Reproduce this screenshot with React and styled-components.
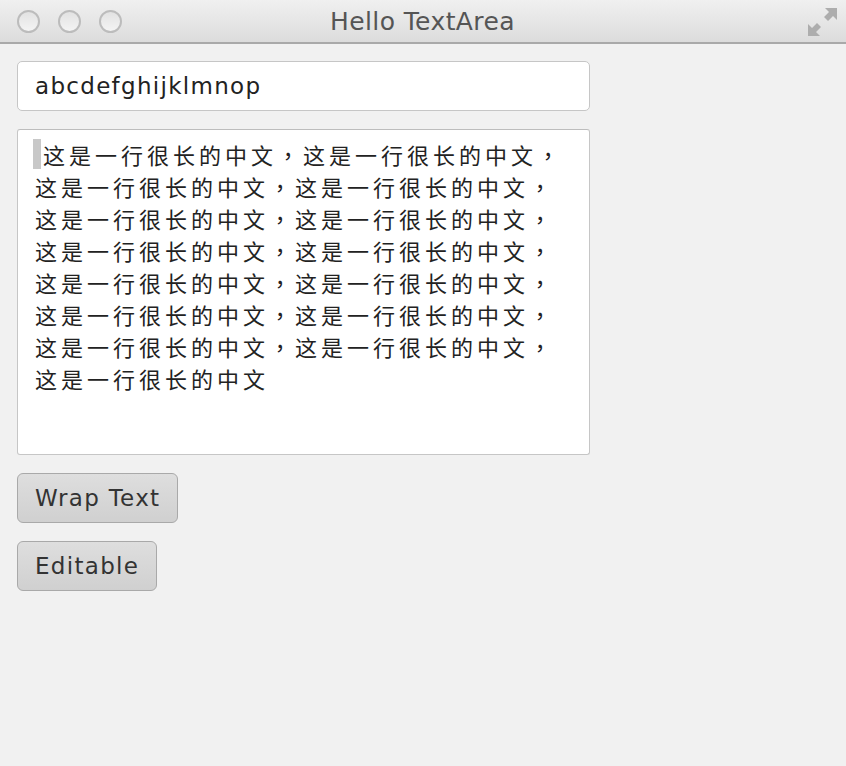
import React from "react";
import styled, { createGlobalStyle } from "styled-components";

const Global = createGlobalStyle`
  html, body { margin: 0; padding: 0; background: #f1f1f1; }
  #root { width: 846px; height: 766px; }
`;

const Window = styled.div`
  width: 846px;
  height: 766px;
  display: flex;
  flex-direction: column;
  background: #f1f1f1;
  font-family: "DejaVu Sans", "Noto Sans CJK SC", sans-serif;
  overflow: hidden;
`;

const TitleBar = styled.div`
  height: 42px;
  flex: none;
  position: relative;
  display: flex;
  align-items: center;
  justify-content: center;
  background: linear-gradient(#f0f0f0, #dcdcdc);
  border-bottom: 2px solid #a9a9a9;
`;

const Lights = styled.div`
  position: absolute;
  left: 17px;
  top: 10px;
  display: flex;
  gap: 18px;
`;

const Light = styled.span`
  width: 19px;
  height: 19px;
  border-radius: 50%;
  border: 2px solid #bcbcbc;
  background: linear-gradient(#e2e2e2, #f4f4f4);
`;

const Title = styled.div`
  font-size: 25px;
  color: #555;
  letter-spacing: 0.4px;
  margin-left: -1px;
`;

const Resize = styled.svg`
  position: absolute;
  right: 8px;
  top: 6px;
`;

const Content = styled.div`
  display: flex;
  flex-direction: column;
  align-items: flex-start;
  gap: 18px;
  padding: 17px 17px;
`;

const Field = styled.div`
  box-sizing: border-box;
  width: 573px;
  height: 50px;
  display: flex;
  align-items: center;
  padding-left: 17px;
  background: #fff;
  border: 1.5px solid #c6c6c6;
  border-radius: 5px;
  font-size: 23px;
  letter-spacing: 1.3px;
  color: #222;
`;

const Area = styled.div`
  box-sizing: border-box;
  width: 573px;
  height: 326px;
  padding: 8px 17px;
  background: #fff;
  border: 1.5px solid #c6c6c6;
  border-top-color: #bdbdbd;
  border-radius: 3px;
  font-family: "Noto Sans CJK TC", "Noto Sans CJK SC", sans-serif;
  font-size: 22px;
  line-height: 32px;
  letter-spacing: 4px;
  color: #222;
`;

const Line = styled.div`
  white-space: nowrap;
  display: flex;
  align-items: center;
`;

const Caret = styled.span`
  display: inline-block;
  width: 8px;
  height: 30px;
  background: #c8c8c8;
  margin-left: -2px;
  margin-right: 2px;
`;

const Button = styled.div`
  box-sizing: border-box;
  height: 50px;
  display: flex;
  align-items: center;
  padding: 0 17px;
  background: linear-gradient(#dedede, #d0d0d0);
  border: 1.5px solid #a9a9a9;
  border-radius: 6px;
  font-size: 23px;
  letter-spacing: 1.3px;
  color: #333;
`;

const phrase = "这是一行很长的中文";

export default function App() {
  const lines = [];
  for (let i = 0; i < 7; i++) lines.push(`${phrase}，${phrase}，`);
  lines.push(phrase);
  return (
    <>
      <Global />
      <Window>
        <TitleBar>
          <Lights>
            <Light />
            <Light />
            <Light />
          </Lights>
          <Title>Hello TextArea</Title>
          <Resize width="32" height="32" viewBox="0 0 32 32">
            <path d="M19 2 L31 2 L31 14 L27 10 L22 15 L18 11 L23 6 Z" fill="#adadad" />
            <path d="M2 18 L2 30 L14 30 L10 26 L15 21 L11 17 L6 22 Z" fill="#adadad" />
          </Resize>
        </TitleBar>
        <Content>
          <Field>abcdefghijklmnop</Field>
          <Area>
            {lines.map((l, i) => (
              <Line key={i}>
                {i === 0 && <Caret />}
                {l}
              </Line>
            ))}
          </Area>
          <Button>Wrap Text</Button>
          <Button>Editable</Button>
        </Content>
      </Window>
    </>
  );
}
